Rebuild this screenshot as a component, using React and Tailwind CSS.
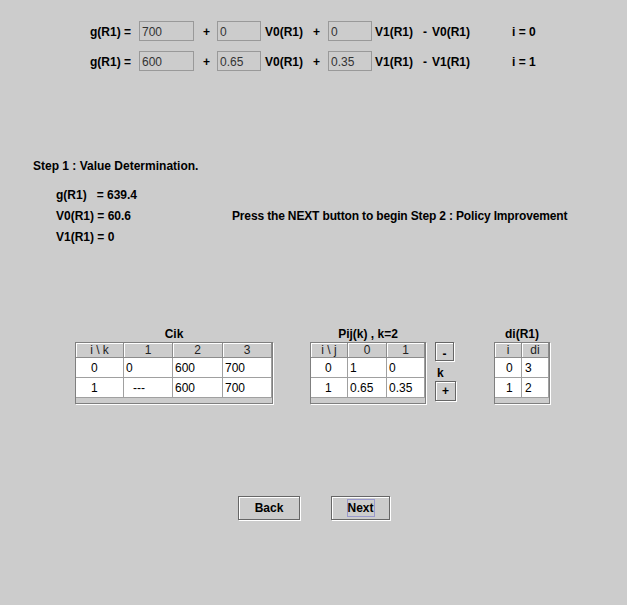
import React from "react";

function Label({ className = "", children }) {
  return (
    <div className={`${className} shrink-0 pt-[4px] leading-[14px] font-bold whitespace-pre text-black`}>
      {children}
    </div>
  );
}

function Field({ className = "", children }) {
  return (
    <div className={`${className} h-[20px] shrink-0 border border-[#999999] pl-[2px] pt-[3px] leading-[14px] text-[#333333] whitespace-pre`}>
      {children}
    </div>
  );
}

function EqRow({ a, b, c, last, idx }) {
  return (
    <div className="flex items-start h-[20px] pl-[90px]">
      <Label className="w-[49px]">g(R1) =</Label>
      <Field className="w-[55px]">{a}</Field>
      <Label className="w-[23px] pl-[9px]">+</Label>
      <Field className="w-[44px]">{b}</Field>
      <Label className="w-[52px] pl-[4px]">V0(R1)</Label>
      <Label className="w-[15px]">+</Label>
      <Field className="w-[44px]">{c}</Field>
      <Label className="w-[51px] pl-[3px]">V1(R1)</Label>
      <Label className="w-[9px]">-</Label>
      <Label className="w-[80px]">{last}</Label>
      <Label>{idx}</Label>
    </div>
  );
}

function DataTable({ widths, header, rows }) {
  return (
    <div className="border border-[#7f7f7f] shadow-[1px_1px_0_#ffffff] bg-[#cccccc]">
      <div className="flex">
        {header.map((h, i) => (
          <div
            key={i}
            className={`${widths[i]} h-[15px] shrink-0 flex items-center justify-center border-r border-b border-[#8c8c8c] shadow-[inset_1px_1px_0_#ffffff] text-[#222222] whitespace-pre`}
          >
            {h}
          </div>
        ))}
      </div>
      {rows.map((r, ri) => (
        <div key={ri} className="flex">
          {r.map((c, ci) => (
            <div
              key={ci}
              className={`${widths[ci]} ${c.cls} h-[20px] shrink-0 flex items-center bg-white border-r border-b border-[#a0a0a0] text-black whitespace-pre`}
            >
              {c.t}
            </div>
          ))}
        </div>
      ))}
      <div className="h-[5px]" />
    </div>
  );
}

function TableGroup({ title, className, children }) {
  return (
    <div className={`${className} flex flex-col items-center shrink-0`}>
      <div className="font-bold leading-[14px] mb-[1px] whitespace-pre">{title}</div>
      {children}
    </div>
  );
}

export default function App() {
  const cikRows = [
    [
      { t: "0", cls: "pl-[15px]" },
      { t: "0", cls: "pl-[2px]" },
      { t: "600", cls: "pl-[2px]" },
      { t: "700", cls: "pl-[2px]" },
    ],
    [
      { t: "1", cls: "pl-[15px]" },
      { t: "---", cls: "pl-[9px]" },
      { t: "600", cls: "pl-[2px]" },
      { t: "700", cls: "pl-[2px]" },
    ],
  ];
  const pijRows = [
    [
      { t: "0", cls: "pl-[14px]" },
      { t: "1", cls: "pl-[2px]" },
      { t: "0", cls: "pl-[2px]" },
    ],
    [
      { t: "1", cls: "pl-[14px]" },
      { t: "0.65", cls: "pl-[2px]" },
      { t: "0.35", cls: "pl-[2px]" },
    ],
  ];
  const diRows = [
    [
      { t: "0", cls: "pl-[11px]" },
      { t: "3", cls: "pl-[3px]" },
    ],
    [
      { t: "1", cls: "pl-[11px]" },
      { t: "2", cls: "pl-[3px]" },
    ],
  ];

  return (
    <div className="w-[627px] h-[605px] bg-[#cccccc] font-['Liberation_Sans',Arial,sans-serif] text-[12px] text-black flex flex-col overflow-hidden">
      {/* Equations */}
      <div className="pt-[21px] flex flex-col gap-[10px]">
        <EqRow a="700" b="0" c="0" last="V0(R1)" idx="i = 0" />
        <EqRow a="600" b="0.65" c="0.35" last="V1(R1)" idx="i = 1" />
      </div>

      {/* Step */}
      <div className="mt-[88px] pl-[33px] font-bold leading-[14px] whitespace-pre">
        Step 1 : Value Determination.
      </div>

      <div className="mt-[12px] flex font-bold leading-[21px]">
        <div className="pl-[56px] w-[232px] shrink-0 whitespace-pre">
          <div>g(R1)   = 639.4</div>
          <div>V0(R1) = 60.6</div>
          <div>V1(R1) = 0</div>
        </div>
        <div className="pt-[21px] whitespace-nowrap tracking-[-0.15px]">
          Press the NEXT button to begin Step 2 : Policy Improvement
        </div>
      </div>

      {/* Tables */}
      <div className="mt-[79px] flex items-start">
        <TableGroup title="Cik" className="ml-[75px]">
          <DataTable
            widths={["w-[48px]", "w-[49px]", "w-[50px]", "w-[49px]"]}
            header={["i \\ k", "1", "2", "3"]}
            rows={cikRows}
          />
        </TableGroup>

        <TableGroup title="Pij(k) , k=2" className="ml-[37px]">
          <DataTable
            widths={["w-[37px]", "w-[39px]", "w-[38px]"]}
            header={["i \\ j", "0", "1"]}
            rows={pijRows}
          />
        </TableGroup>

        <div className="ml-[9px] mt-[15px] flex flex-col shrink-0 w-[22px]">
          <button className="w-[19px] h-[19px] border border-[#666666] shadow-[1px_1px_0_#ffffff,inset_1px_1px_0_#ffffff] bg-[#cccccc] flex items-center justify-center pt-[4px] font-bold text-black leading-none p-0">
            -
          </button>
          <div className="mt-[5px] pl-[2px] font-bold leading-[14px]">k</div>
          <button className="mt-[1px] w-[21px] h-[20px] border border-[#666666] shadow-[1px_1px_0_#ffffff,inset_1px_1px_0_#ffffff] bg-[#cccccc] flex items-center justify-center font-bold text-black leading-none p-0">
            +
          </button>
        </div>

        <TableGroup title="di(R1)" className="ml-[37px]">
          <DataTable
            widths={["w-[27px]", "w-[27px]"]}
            header={["i", "di"]}
            rows={diRows}
          />
        </TableGroup>
      </div>

      {/* Buttons */}
      <div className="mt-[92px] flex pl-[238px]">
        <button className="w-[62px] h-[24px] border border-[#666666] shadow-[1px_1px_0_#ffffff,inset_1px_1px_0_#ffffff] bg-[#cccccc] flex items-center justify-center font-bold text-black">
          Back
        </button>
        <button className="ml-[31px] w-[59px] h-[24px] border border-[#666666] shadow-[1px_1px_0_#ffffff,inset_1px_1px_0_#ffffff] bg-[#cccccc] flex items-center justify-center font-bold text-black">
          <span className="w-[28px] h-[18px] border border-[#9999cc] flex items-center justify-center">
            Next
          </span>
        </button>
      </div>
    </div>
  );
}
